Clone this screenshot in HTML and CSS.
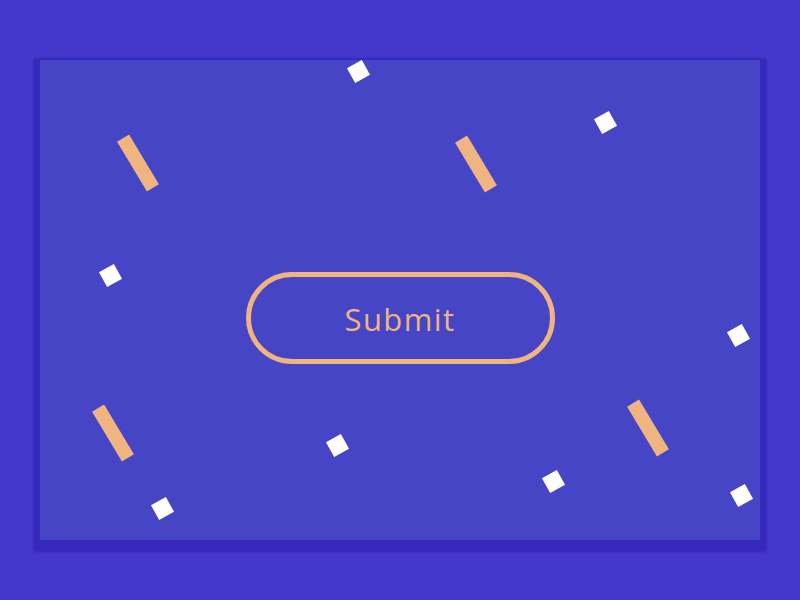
FILE: index.html
```html
<!DOCTYPE html>
<html>
<head>
<meta charset="utf-8">
<link rel="stylesheet" href="styles.css">
</head>
<body>
<div class="stage">
  <div class="panel">
    <span class="bar b1"></span>
    <span class="bar b2"></span>
    <span class="bar b3"></span>
    <span class="bar b4"></span>
    <span class="sq s1"></span>
    <span class="sq s2"></span>
    <span class="sq s3"></span>
    <span class="sq s4"></span>
    <span class="sq s5"></span>
    <span class="sq s6"></span>
    <span class="sq s7"></span>
    <span class="sq s8"></span>
    <button class="submit">Submit</button>
  </div>
</div>
</body>
</html>
```
FILE: styles.css
```css
html, body {
  margin: 0;
  padding: 0;
  background: #4338ca;
}
.stage {
  width: 800px;
  height: 600px;
  padding: 60px 40px;
  box-sizing: border-box;
}
.panel {
  position: relative;
  width: 720px;
  height: 480px;
  background: #4545c6;
  border-radius: 1px;
  box-shadow: 0 5px 2px 7px #3628ba;
  overflow: hidden;
  display: flex;
  align-items: center;
  justify-content: center;
  padding-top: 36px;
  box-sizing: border-box;
}
.submit {
  width: 309px;
  height: 92px;
  border: 5px solid #efb47f;
  border-radius: 46px;
  background: transparent;
  color: #efb47f;
  font-family: "Open Sans", "DejaVu Sans", sans-serif;
  font-size: 31px;
  font-weight: 400;
  letter-spacing: 1.4px;
  padding: 2px 0 0 0;
  box-sizing: border-box;
}
.bar {
  position: absolute;
  width: 14px;
  height: 58px;
  background: #efb47f;
  transform: rotate(-31deg);
}
.b1 { left: 91px; top: 74px; }
.b2 { left: 429px; top: 75px; }
.b3 { left: 66px; top: 344px; }
.b4 { left: 601px; top: 339px; }
.sq {
  position: absolute;
  width: 17px;
  height: 17px;
  background: #ffffff;
  transform: rotate(-29deg);
}
.s1 { left: 309.5px; top: 2.5px; }
.s2 { left: 556.5px; top: 53.5px; }
.s3 { left: 61.5px; top: 206.5px; }
.s4 { left: 689.5px; top: 266.5px; }
.s5 { left: 288.5px; top: 376.5px; }
.s6 { left: 504.5px; top: 412.5px; }
.s7 { left: 113.5px; top: 439.5px; }
.s8 { left: 692.5px; top: 426.5px; }
```
